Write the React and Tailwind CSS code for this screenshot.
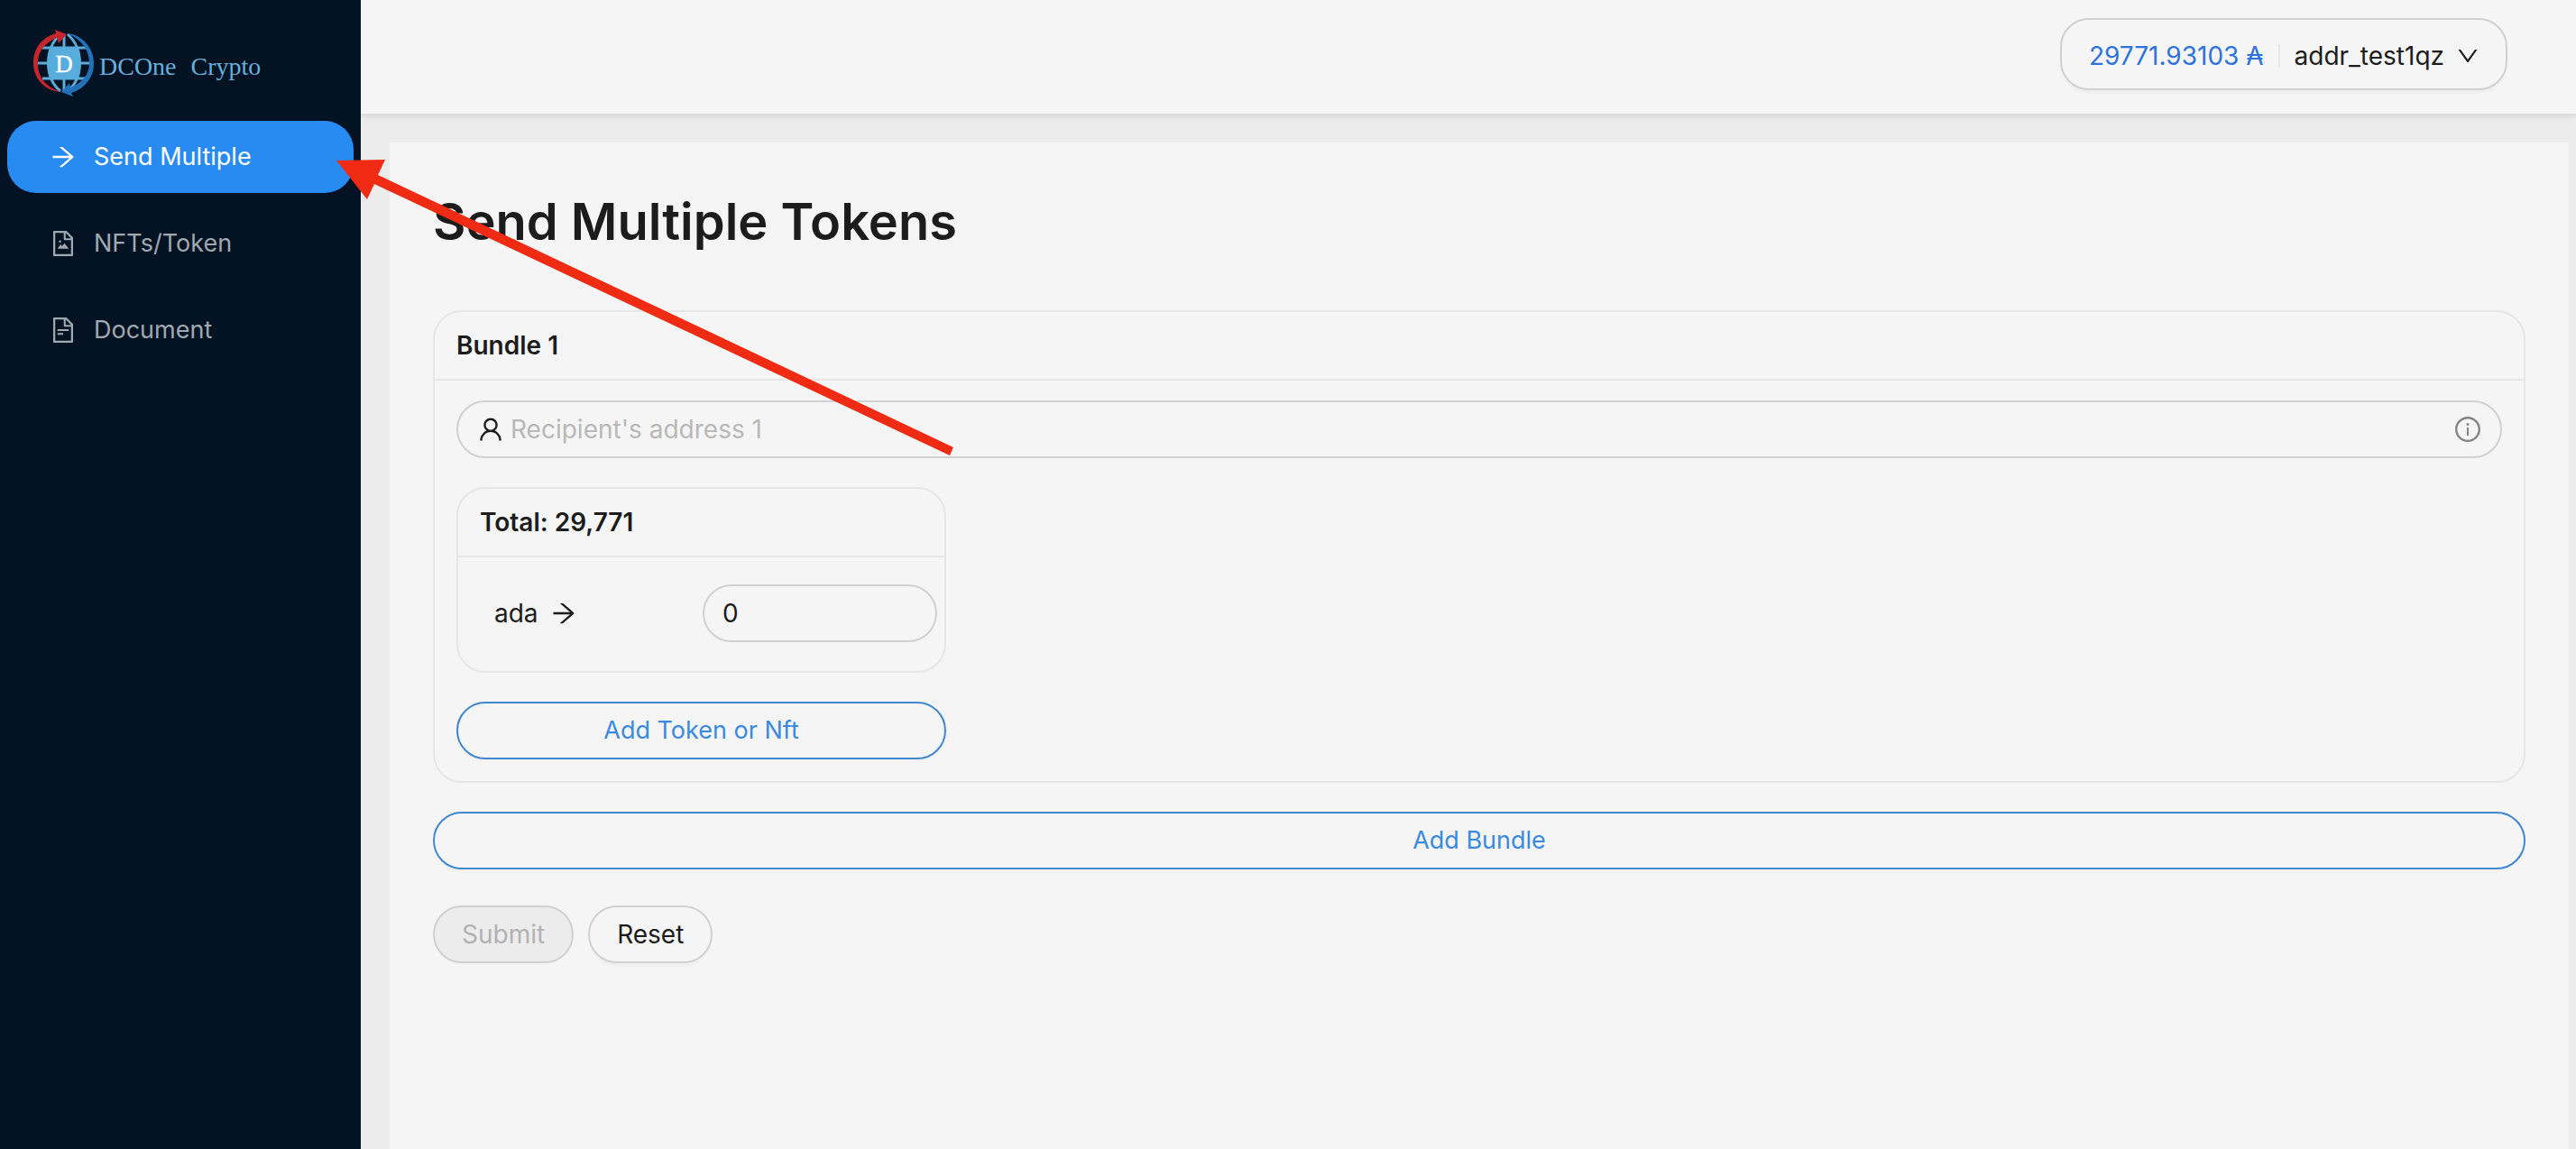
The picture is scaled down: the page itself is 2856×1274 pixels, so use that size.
import { useState } from "react";
import {
  AiOutlineArrowRight,
  AiOutlineDown,
  AiOutlineFileImage,
  AiOutlineFileText,
  AiOutlineInfoCircle,
  AiOutlineUser,
} from "react-icons/ai";

const menu = [
  { label: "Send Multiple", icon: AiOutlineArrowRight, active: true },
  { label: "NFTs/Token", icon: AiOutlineFileImage },
  { label: "Document", icon: AiOutlineFileText },
];

function Logo() {
  return (
    <a href="#" className="flex h-[74px] items-center gap-1 pl-9 text-[28px] text-[#67b0dc]">
      <svg viewBox="0 -1 70 76" className="h-[76px] w-[70px] shrink-0" aria-hidden="true">
        <g fill="none" stroke="#5bacd9" strokeWidth="3">
          <path d="M11 21H60M6 38H64M11 55H60M35 6V70" />
          <path d="M31 6C13 22 13 54 31 69M39 6C57 22 57 54 39 69" />
        </g>
        <path d="M20 20H50C54 31 54 45 50 56H20C16 45 16 31 20 20Z" fill="#57addb" />
        <path d="M38 5C54 6 68 20 68 38C68 56 56 67 43 71L45 75L32 70L41 60L42 65C54 60 63 52 63 38C63 22 52 10 38 5Z" fill="#2371b8" />
        <path d="M33 70C15 70 1 56 1 38C1 20 12 9 26 5L25 1L38 6L29 16L27 10C14 15 6 25 6 38C6 53 15 66 33 70Z" fill="#c4262e" />
        <text x="35" y="48" textAnchor="middle" fontSize="27" fill="#ffffff" stroke="#ffffff" strokeWidth="0.300" fontFamily="Liberation Serif, serif">D</text>
      </svg>
      <span className="flex gap-4 pt-2.5 font-['Liberation_Serif',serif]">
        <span>DCOne</span>
        <span>Crypto</span>
      </span>
    </a>
  );
}

function Sidebar() {
  return (
    <aside className="w-[400px] shrink-0 bg-[#031323] pt-8">
      <Logo />
      <nav className="mt-7 flex flex-col gap-4 px-2 text-[27px]">
        {menu.map(({ label, icon: Icon, active }) => (
          <a
            key={label}
            href="#"
            aria-current={active ? "page" : undefined}
            className={
              active
                ? "flex h-20 items-center gap-[18px] rounded-[32px] bg-[#288bf2] pl-[46px] text-white"
                : "flex h-20 items-center gap-[18px] rounded-[32px] pl-[46px] text-[#a0a8b0]"
            }
          >
            <Icon className="size-8" />
            <span>{label}</span>
          </a>
        ))}
      </nav>
    </aside>
  );
}

function Header() {
  return (
    <header className="relative flex h-[126px] items-start justify-end bg-[#f5f5f5] pt-5 pr-[76px] shadow-[0_2px_8px_rgba(0,0,0,0.12)]">
      <button className="flex h-20 items-center rounded-[32px] border-2 border-[#d0d0d0] pr-7 pl-[30px] pt-1 shadow-[0_4px_0_rgba(0,0,0,0.02)]">
        <span className="text-[#2e72de]">29771.93103 ₳</span>
        <span className="mx-4 h-[26px] w-0.5 bg-[#e6e6e6]" />
        <span>addr_test1qz</span>
        <AiOutlineDown className="ml-3 size-7" />
      </button>
    </header>
  );
}

function Card({ title, className, children }) {
  return (
    <section className={className}>
      <h2 className="flex h-[76px] items-center border-b-2 border-[#e6e6e6] px-6 font-semibold">{title}</h2>
      {children}
    </section>
  );
}

function OutlineButton({ children, onClick }) {
  return (
    <button
      type="button"
      onClick={onClick}
      className="h-16 w-full rounded-[32px] border-2 border-[#4087d0] text-[27px] text-[#3b8ade] shadow-[0_4px_0_rgba(0,0,0,0.01)]"
    >
      {children}
    </button>
  );
}

function PointerArrow() {
  return (
    <svg viewBox="372 174 686 334" className="pointer-events-none absolute top-[174px] left-[372px] h-[334px] w-[686px]" aria-hidden="true">
      <path d="M373 178L427 177L419 194L1057 496L1053 505L415 204L407 221Z" fill="#f02b14" />
    </svg>
  );
}

export default function App() {
  const [address, setAddress] = useState("");
  const [amount, setAmount] = useState("0");
  return (
    <div className="relative flex min-h-screen bg-[#ececec] font-['Inter',sans-serif] text-[28px] leading-[44px] text-[#1c1c1c]">
      <Sidebar />
      <div className="flex min-w-0 flex-1 flex-col">
        <Header />
        <main className="mt-8 mr-2 ml-8 flex-1 bg-[#f5f5f5] px-12">
          <h1 className="pt-12 text-[56px] leading-[80px] font-semibold">Send Multiple Tokens</h1>
          <form className="mt-[58px]" onSubmit={(e) => e.preventDefault()}>
            <Card title="Bundle 1" className="rounded-[32px] border-2 border-[#e6e6e6]">
              <div className="px-6 pt-[22px] pb-6">
                <label className="flex h-16 items-center gap-1.5 rounded-[32px] border-2 border-[#d0d0d0] px-5">
                  <AiOutlineUser className="size-8" />
                  <input
                    aria-label="Recipient's address 1"
                    placeholder="Recipient's address 1"
                    value={address}
                    onChange={(e) => setAddress(e.target.value)}
                    className="min-w-0 flex-1 bg-transparent outline-none placeholder:text-[#b8b8b8]"
                  />
                  <AiOutlineInfoCircle className="size-8 text-[#848484]" />
                </label>
                <div className="mt-8 w-[543px]">
                  <Card title="Total: 29,771" className="rounded-[32px] border-2 border-[#e6e6e6]">
                    <div className="flex items-center justify-between pt-[30px] pr-2 pb-8 pl-10">
                      <label htmlFor="ada" className="flex items-center gap-3">
                        ada <AiOutlineArrowRight className="size-8" />
                      </label>
                      <input
                        id="ada"
                        value={amount}
                        onChange={(e) => setAmount(e.target.value)}
                        className="h-16 w-[260px] rounded-[32px] border-2 border-[#d0d0d0] bg-transparent px-5 outline-none"
                      />
                    </div>
                  </Card>
                  <div className="mt-8">
                    <OutlineButton>Add Token or Nft</OutlineButton>
                  </div>
                </div>
              </div>
            </Card>
            <div className="mt-8">
              <OutlineButton>Add Bundle</OutlineButton>
            </div>
            <div className="mt-10 flex gap-4">
              <button type="submit" disabled className="h-16 rounded-[32px] border-2 border-[#d0d0d0] bg-[#ececec] px-[30px] text-[#b2b2b2]">
                Submit
              </button>
              <button type="reset" className="h-16 rounded-[32px] border-2 border-[#d0d0d0] px-[30px] shadow-[0_4px_0_rgba(0,0,0,0.02)]">
                Reset
              </button>
            </div>
          </form>
        </main>
      </div>
      <PointerArrow />
    </div>
  );
}
